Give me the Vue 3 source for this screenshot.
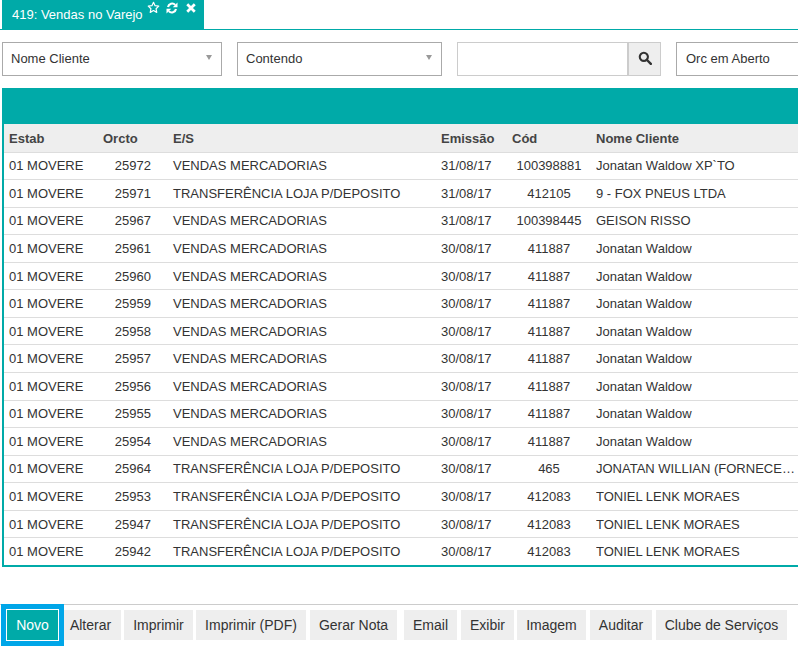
<script setup>
const rows = [
  ['25972', 'VENDAS MERCADORIAS', '31/08/17', '100398881', 'Jonatan Waldow XP`TO'],
  ['25971', 'TRANSFERÊNCIA LOJA P/DEPOSITO', '31/08/17', '412105', '9 - FOX PNEUS LTDA'],
  ['25967', 'VENDAS MERCADORIAS', '31/08/17', '100398445', 'GEISON RISSO'],
  ['25961', 'VENDAS MERCADORIAS', '30/08/17', '411887', 'Jonatan Waldow'],
  ['25960', 'VENDAS MERCADORIAS', '30/08/17', '411887', 'Jonatan Waldow'],
  ['25959', 'VENDAS MERCADORIAS', '30/08/17', '411887', 'Jonatan Waldow'],
  ['25958', 'VENDAS MERCADORIAS', '30/08/17', '411887', 'Jonatan Waldow'],
  ['25957', 'VENDAS MERCADORIAS', '30/08/17', '411887', 'Jonatan Waldow'],
  ['25956', 'VENDAS MERCADORIAS', '30/08/17', '411887', 'Jonatan Waldow'],
  ['25955', 'VENDAS MERCADORIAS', '30/08/17', '411887', 'Jonatan Waldow'],
  ['25954', 'VENDAS MERCADORIAS', '30/08/17', '411887', 'Jonatan Waldow'],
  ['25964', 'TRANSFERÊNCIA LOJA P/DEPOSITO', '30/08/17', '465', 'JONATAN WILLIAN (FORNECEDOR)'],
  ['25953', 'TRANSFERÊNCIA LOJA P/DEPOSITO', '30/08/17', '412083', 'TONIEL LENK MORAES'],
  ['25947', 'TRANSFERÊNCIA LOJA P/DEPOSITO', '30/08/17', '412083', 'TONIEL LENK MORAES'],
  ['25942', 'TRANSFERÊNCIA LOJA P/DEPOSITO', '30/08/17', '412083', 'TONIEL LENK MORAES'],
]
const buttons = [
  { label: 'Alterar', w: 61, ml: 2 },
  { label: 'Imprimir', w: 69, ml: 3 },
  { label: 'Imprimir (PDF)', w: 110, ml: 3 },
  { label: 'Gerar Nota', w: 87, ml: 4 },
  { label: 'Email', w: 53, ml: 7 },
  { label: 'Exibir', w: 53, ml: 4 },
  { label: 'Imagem', w: 69, ml: 3 },
  { label: 'Auditar', w: 62, ml: 4 },
  { label: 'Clube de Serviços', w: 131, ml: 4 },
]
</script>

<template>
  <div class="page">
    <div class="tabbar">
      <div class="tab">
        <span class="tab-title">419: Vendas no Varejo</span>
        <svg class="ic star" viewBox="0 0 24 24" width="13" height="13">
          <path d="M12 2.500l2.900 6.200 6.800.8-5 4.700 1.300 6.800-6-3.400-6 3.400 1.300-6.800-5-4.700 6.800-.8z" fill="none" stroke="#fff" stroke-width="2.200" stroke-linejoin="round"/>
        </svg>
        <svg class="ic" viewBox="0 0 24 24" width="12" height="12">
          <path d="M4 10a8.500 8.500 0 0 1 14.500-4.200M20 14a8.500 8.500 0 0 1-14.500 4.200" fill="none" stroke="#fff" stroke-width="4.200"/>
          <path d="M23 1v9.500h-9.500zM1 23V13.500h9.500z" fill="#fff"/>
        </svg>
        <svg class="ic" viewBox="0 0 24 24" width="12" height="12">
          <path d="M4.500 4.500l15 15M19.500 4.500l-15 15" fill="none" stroke="#fff" stroke-width="5.500"/>
        </svg>
      </div>
    </div>

    <div class="filters">
      <div class="select s1"><span>Nome Cliente</span><i class="caret"></i></div>
      <div class="select s2"><span>Contendo</span><i class="caret"></i></div>
      <div class="search">
        <div class="input"></div>
        <div class="search-btn">
          <svg viewBox="0 0 24 24" width="14" height="14">
            <circle cx="10" cy="10" r="7" fill="none" stroke="#333" stroke-width="3.600"/>
            <path d="M15 15l7 7" stroke="#333" stroke-width="4.200" stroke-linecap="round"/>
          </svg>
        </div>
      </div>
      <div class="select s3"><span>Orc em Aberto</span></div>
    </div>

    <div class="panel">
      <div class="panel-head"></div>
      <table class="grid">
        <colgroup>
          <col class="c1" /><col class="c2" /><col class="c3" /><col class="c4" /><col class="c5" /><col class="c6" />
        </colgroup>
        <thead>
          <tr>
            <th class="first">Estab</th>
            <th>Orcto</th>
            <th>E/S</th>
            <th>Emissão</th>
            <th>Cód</th>
            <th>Nome Cliente</th>
          </tr>
        </thead>
        <tbody>
          <tr v-for="r in rows" :key="r[0]">
            <td class="first">01 MOVERE</td>
            <td class="num">{{ r[0] }}</td>
            <td>{{ r[1] }}</td>
            <td>{{ r[2] }}</td>
            <td class="code">{{ r[3] }}</td>
            <td class="name"><div class="ell">{{ r[4] }}</div></td>
          </tr>
        </tbody>
      </table>
    </div>

    <div class="toolbar">
      <button class="btn novo">Novo</button>
      <button
        v-for="b in buttons"
        :key="b.label"
        class="btn"
        :style="{ width: b.w + 'px', marginLeft: b.ml + 'px' }"
      >{{ b.label }}</button>
    </div>
    <div class="end-line"></div>
  </div>
</template>

<style>
html, body { margin: 0; background: #fff; overflow: hidden; }
</style>

<style scoped>
.page {
  width: 798px;
  height: 656px;
  overflow: hidden;
  font-family: "Liberation Sans", Arial, sans-serif;
  font-size: 13px;
  color: #333;
}
.tabbar {
  height: 29px;
  padding-left: 2px;
  border-bottom: 1px solid #00aaa8;
}
.tab {
  width: 202px;
  height: 30px;
  box-sizing: border-box;
  background: #00aaa8;
  color: #fff;
  padding-left: 10px;
  display: flex;
  align-items: flex-start;
}
.tab-title { line-height: 29px; margin-right: 4px; white-space: nowrap; flex: none; }
.ic { margin-top: 2px; margin-right: 7px; flex: none; }
.star { margin-top: 1px; margin-right: 6px; width: 13px; }
.filters {
  display: flex;
  padding: 12px 0 0 2px;
  height: 34px;
}
.select {
  box-sizing: border-box;
  height: 34px;
  border: 1px solid #aaa;
  background: #fff;
  display: flex;
  align-items: center;
  justify-content: space-between;
  padding: 0 9px 2px 8px;
  flex: none;
}
.s1 { width: 220px; margin-right: 15px; }
.s2 { width: 205px; margin-right: 15px; }
.s3 { width: 130px; margin-left: 15px; padding-left: 9px; }
.caret {
  width: 0;
  height: 0;
  border-left: 3.500px solid transparent;
  border-right: 3.500px solid transparent;
  border-top: 5px solid #999;
  margin-bottom: 1px;
}
.search { display: flex; flex: none; }
.input {
  box-sizing: border-box;
  width: 171px;
  height: 34px;
  border: 1px solid #ccc;
  background: #fff;
}
.search-btn {
  box-sizing: border-box;
  width: 33px;
  height: 34px;
  border: 1px solid #ccc;
  background: #eee;
  display: flex;
  align-items: center;
  justify-content: center;
  padding-bottom: 3px;
}
.panel {
  margin: 12px 0 0 2px;
  border-left: 2px solid #00aaa8;
  border-bottom: 2px solid #00aaa8;
  width: 796px;
  box-sizing: border-box;
  overflow: hidden;
}
.panel-head {
  height: 36px;
  margin-left: -2px;
  background: #00aaa8;
}
.grid {
  border-collapse: collapse;
  table-layout: fixed;
  width: 794px;
}
.c1 { width: 93px; }
.c2 { width: 70px; }
.c3 { width: 268px; }
.c4 { width: 71px; }
.c5 { width: 84px; }
.c6 { width: 208px; }
th {
  height: 28px;
  padding: 1px 0 0 6px;
  background: #eee;
  text-align: left;
  font-weight: 700;
  border-bottom: 1px solid #ddd;
  box-sizing: border-box;
  color: #444;
}
td {
  height: 27.570px;
  box-sizing: border-box;
  padding: 0 0 0 6px;
  border-bottom: 1px solid #ddd;
  white-space: nowrap;
  color: #333;
}
tbody tr:last-child td { border-bottom: 0; }
.first { padding-left: 5px; }
td.num { text-align: right; padding: 0 16px 0 0; }
td.code { text-align: center; padding: 0 0 0 2px; }
.ell {
  width: 200px;
  overflow: hidden;
  text-overflow: ellipsis;
}
.toolbar {
  margin-top: 37px;
  height: 41px;
  border-top: 1px solid #ccc;
  display: flex;
  align-items: flex-start;
  padding-top: 5px;
  padding-left: 7px;
  box-sizing: content-box;
}
.btn {
  box-sizing: border-box;
  height: 30px;
  border: 0;
  padding: 0;
  background: #eee;
  color: #333;
  font-family: inherit;
  font-size: 14px;
  flex: none;
}
.novo {
  width: 51px;
  background: #00aaa8;
  color: #fff;
  box-shadow: 0 0 0 1px #fff, 0 0 0 6px #00a6e8;
  position: relative;
  z-index: 1;
}
.end-line {
  margin-top: 7px;
  height: 1px;
  background: #1a7fc0;
}
</style>
